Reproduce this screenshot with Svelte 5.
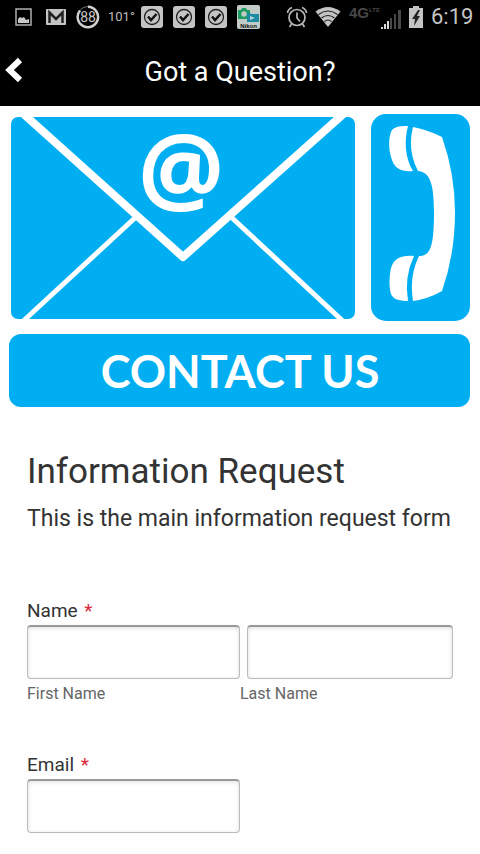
<script>
  const checks = [0, 1, 2];
  let first = $state('');
  let last = $state('');
  let email = $state('');
</script>

<div class="screen">
  <div class="status">
    <div class="group left">
      <svg width="23" height="24" viewBox="0 0 23 24" aria-hidden="true">
        <rect x="1" y="4" width="15" height="16" fill="none" stroke="#b0b0b0" stroke-width="1.5" />
        <path d="M3 18v-4l2-2 2 1 2-1 2 3 3-1v4z" fill="#c8c8c8" />
      </svg>
      <svg width="22" height="24" viewBox="0 0 22 24" aria-hidden="true">
        <rect x="0" y="4" width="20" height="16" rx="1" fill="#c4c4c4" />
        <path d="M3.500 18V7.500L10 14l6.500-6.500V18" fill="none" stroke="#222" stroke-width="2.5" />
      </svg>
      <svg width="24" height="24" viewBox="0 0 24 24" aria-hidden="true">
        <circle cx="12" cy="12" r="10.5" fill="none" stroke="#777" stroke-width="1" />
        <path d="M12 1.800A10.200 10.200 0 1 1 4 5.500" fill="none" stroke="#d0d0d0" stroke-width="2.5" />
        <text x="12" y="17" text-anchor="middle" class="gauge">88</text>
      </svg>
      <span class="temp">101°</span>
      {#each checks as c (c)}
        <svg width="24" height="24" viewBox="0 0 24 24" aria-hidden="true">
          <rect x="0" y="1" width="22" height="22" rx="3" fill="#c4c4c4" />
          <circle cx="11" cy="12" r="7.5" fill="none" stroke="#222" stroke-width="1.3" />
          <path d="M7 11.500l3 3.500 5.500-6" fill="none" stroke="#111" stroke-width="2.5" />
        </svg>
      {/each}
      <svg width="24" height="24" viewBox="0 0 24 24" aria-hidden="true">
        <rect x="0" y="0" width="23" height="24" rx="2" fill="#c3cbc6" />
        <path d="M1 5h3l1-2h4l1 2h3v9H1z" fill="#1f9c62" />
        <circle cx="7" cy="9" r="2.700" fill="#c3cbc6" />
        <path d="M10 8h3l1 1h8v8H10z" fill="#1c8ca4" />
        <path d="M13 11l5 2-5 2z" fill="#b9d3d8" />
        <text x="11.500" y="22.500" text-anchor="middle" class="brand">Nikon</text>
      </svg>
    </div>
    <div class="group right">
      <svg width="22" height="24" viewBox="0 0 22 24" fill="none" stroke="#b8b8b8" aria-hidden="true">
        <circle cx="11" cy="12.500" r="8" stroke-width="1.700" />
        <path d="M11 7.500v5.500l3 3.500" stroke-width="1.700" />
        <path d="M1.500 8Q2 4 6 2.500M20.500 8Q20 4 16 2.500M5.500 19l-2 3M16.500 19l2 3" stroke-width="1.700" />
      </svg>
      <svg width="27" height="24" viewBox="0 0 27 24" aria-hidden="true">
        <path d="M0.500 6.500Q13 -2.500 25.500 6.500L13 22z" fill="#c4c4c4" />
        <path d="M3.500 9.500Q13 2.500 22.500 9.500M6.500 13Q13 8 19.500 13M9.500 16.500Q13 13.500 16.500 16.500" fill="none" stroke="#1a1a1a" stroke-width="1.200" />
      </svg>
      <svg width="53" height="26" viewBox="0 0 53 26" aria-hidden="true">
        <text x="0" y="14" class="net">4G</text>
        <text x="20" y="8" class="lte">LTE</text>
        <path d="M32 25v-2h2v2zM35 25v-5h2v5zM38 25v-8h2v8z" fill="#d8d8d8" />
        <path d="M41 25V14h2v11zM45 25V10h2v15zM49 25V6h3v19z" fill="#484848" />
      </svg>
      <svg width="15" height="24" viewBox="0 0 15 24" aria-hidden="true">
        <path d="M4 1h6v2h4v20H0V3h4z" fill="#c4c4c4" />
        <path d="M9 5L3 14h3l-1 7 6-10H8l3-6z" fill="#222" />
      </svg>
      <span class="clock">6:19</span>
    </div>
  </div>

  <header>
    <button class="back" type="button" aria-label="Back">
      <svg width="20" height="26" viewBox="0 0 20 26" aria-hidden="true">
        <path d="M17 3L6.500 13 17 23" fill="none" stroke="#fff" stroke-width="6" />
      </svg>
    </button>
    <h1>Got a Question?</h1>
  </header>

  <svg class="banner" viewBox="0 0 480 304" role="img" aria-label="Contact us">
    <rect x="11" y="11" width="344" height="202" rx="7" fill="#02aef2" />
    <path d="M18 3L183 151 349 3" fill="none" stroke="#fff" stroke-width="8" stroke-linejoin="round" />
    <path d="M137 110L20 218M230 110L346 218" fill="none" stroke="#fff" stroke-width="5" />
    <text x="181" y="98" text-anchor="middle" class="at">@</text>
    <rect x="371" y="8" width="99" height="207" rx="15" fill="#02aef2" />
    <path d="M408 20C398 20 393 21 391 26C388 34 389 46 392 54C395 63 402 66 413 65C405 52 404 35 408 20Z" fill="#fff" />
    <path d="M413 21Q428 24 442 31Q455 68 455 106Q455 148 442 185Q428 193 413 195Q409 170 419 150C430 150 434 142 434 106C434 78 430 66 418 65Q407 44 413 21Z" fill="#fff" />
    <path d="M414 150C402 149 394 152 391 162C389 171 389 182 391 188C393 193 399 195 408 195Q404 171 414 150Z" fill="#fff" />
    <rect x="9" y="228" width="461" height="73" rx="12" fill="#02aef2" />
    <text x="240" y="282" text-anchor="middle" class="contact">CONTACT US</text>
  </svg>

  <form onsubmit={(e) => e.preventDefault()}>
    <h2>Information Request</h2>
    <p class="intro">This is the main information request form</p>

    <fieldset>
      <legend>Name <span class="req">*</span></legend>
      <div class="cols">
        <div class="cell">
          <input id="first" type="text" bind:value={first} />
          <label class="hint" for="first">First Name</label>
        </div>
        <div class="cell second">
          <input id="last" type="text" bind:value={last} />
          <label class="hint" for="last">Last Name</label>
        </div>
      </div>
    </fieldset>

    <div class="field">
      <label class="title" for="email">Email <span class="req">*</span></label>
      <div class="cols">
        <input id="email" type="email" bind:value={email} />
      </div>
    </div>
  </form>
</div>

<style>
  :global(body) {
    margin: 0;
    background: #fefefe;
  }
  .screen {
    font-family: Roboto, "Noto Sans", sans-serif;
    color: #333;
    padding-bottom: 20px;
  }
  .status {
    height: 34px;
    padding: 0 8px 0 15px;
    background: #000;
    display: flex;
    justify-content: space-between;
    align-items: center;
  }
  .group {
    display: flex;
    align-items: center;
  }
  .group svg {
    flex: none;
  }
  .left {
    gap: 8px;
  }
  .right {
    gap: 7px;
  }
  .gauge {
    font: 14px Roboto, sans-serif;
    fill: #c8c8c8;
  }
  .temp {
    width: 25px;
    font-size: 13px;
    line-height: 24px;
    color: #bbb;
    white-space: nowrap;
  }
  .brand {
    font: bold 6px "Liberation Sans", sans-serif;
    fill: #111;
  }
  .net {
    font: bold 15px "Liberation Sans", sans-serif;
    fill: #484848;
  }
  .lte {
    font: bold 6px "Liberation Sans", sans-serif;
    fill: #484848;
  }
  .clock {
    width: 41px;
    font-size: 22px;
    line-height: 24px;
    color: #c4c4c4;
    white-space: nowrap;
  }
  header {
    height: 72px;
    background: #000;
    color: #fff;
    display: grid;
    grid-template-columns: 48px 1fr 48px;
    align-items: center;
  }
  .back {
    height: 48px;
    padding: 0 0 0 3px;
    border: 0;
    background: none;
    display: flex;
    align-items: center;
  }
  h1 {
    margin: 0;
    padding-top: 3px;
    font-size: 27px;
    line-height: 32px;
    font-weight: 400;
    text-align: center;
  }
  .banner {
    display: block;
    width: 100%;
    overflow: visible;
  }
  .at {
    font: bold 96px "Open Sans", sans-serif;
    fill: #fff;
  }
  .contact {
    font: bold 45px Lato, sans-serif;
    fill: #fff;
  }
  form {
    padding: 41px 27px 0;
  }
  h2 {
    margin: 0;
    font-size: 35px;
    line-height: 42px;
    font-weight: 400;
  }
  .intro {
    margin: 12px 0 0;
    font-size: 23px;
    line-height: 28px;
  }
  fieldset {
    margin: 66px 0 0;
    padding: 0;
    border: 0;
    min-width: 0;
  }
  legend,
  .title {
    display: block;
    padding: 0;
    font-size: 19px;
    line-height: 24px;
    margin-bottom: 2px;
  }
  .req {
    margin-left: 2px;
    color: #d9263a;
  }
  .cols {
    display: grid;
    grid-template-columns: repeat(2, minmax(0, 1fr));
  }
  .cell {
    display: flex;
    flex-direction: column;
    min-width: 0;
  }
  .second input {
    width: auto;
    margin-left: 7px;
  }
  input {
    box-sizing: border-box;
    width: 100%;
    min-width: 0;
    height: 54px;
    padding: 8px;
    border: 1px solid #bbb;
    border-top: 2px solid #999;
    border-radius: 4px;
    background: #fff;
    box-shadow: inset 0 1px 4px #ddd;
    font: inherit;
    font-size: 19px;
  }
  .hint {
    margin-top: 5px;
    font-size: 16px;
    line-height: 20px;
    color: #666;
  }
  .field {
    margin-top: 49px;
  }
</style>
